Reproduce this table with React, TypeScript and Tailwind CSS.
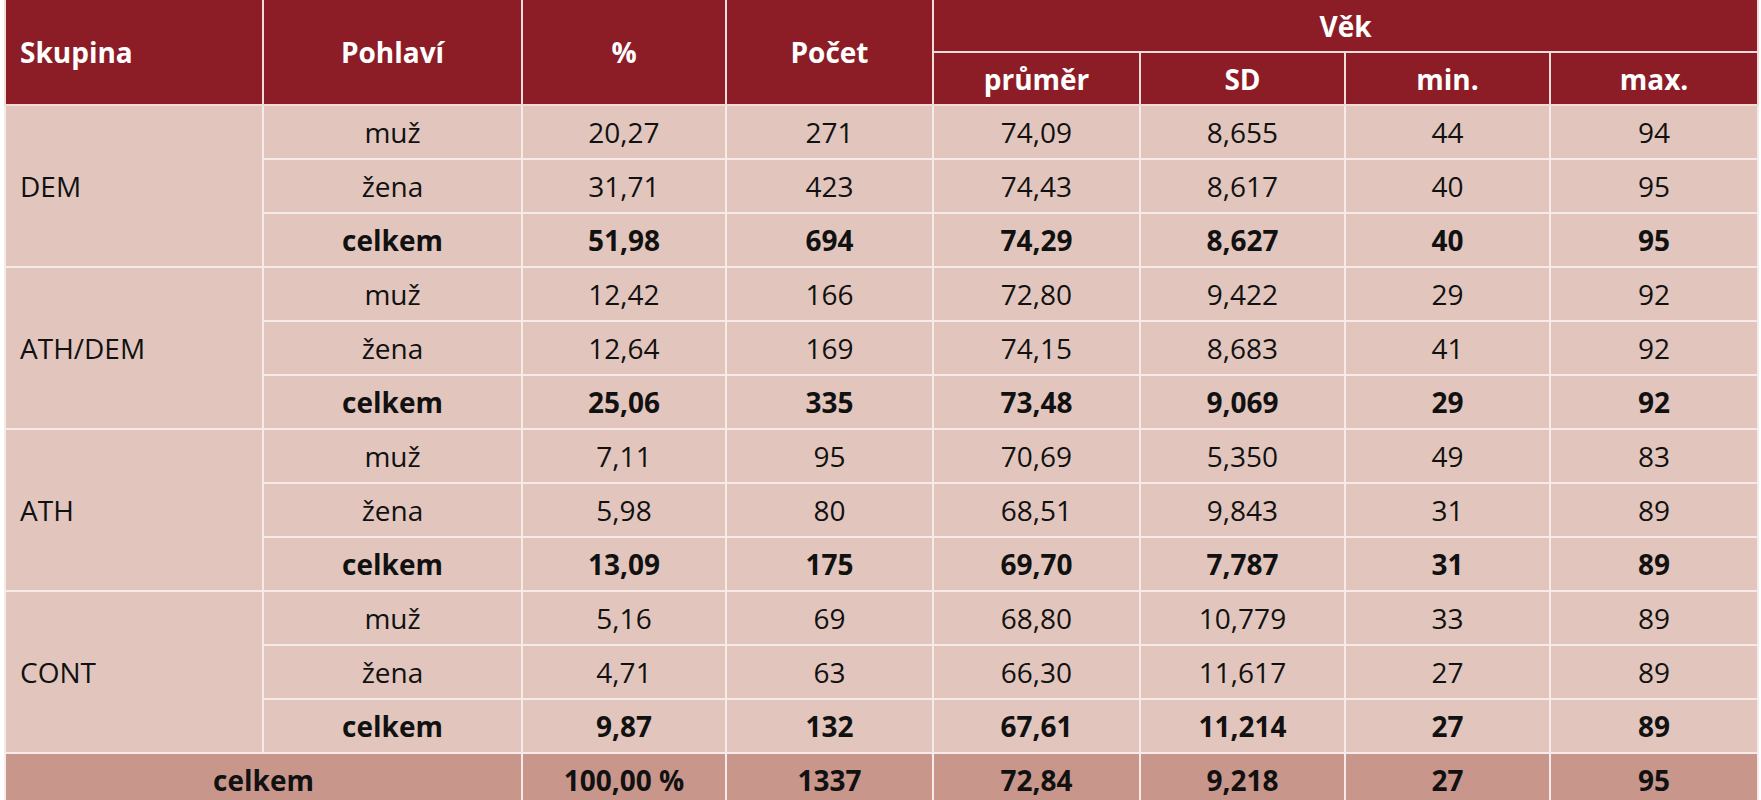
const rows: { group: string; items: string[][] }[] = [
  {
    group: "DEM",
    items: [
      ["muž", "20,27", "271", "74,09", "8,655", "44", "94"],
      ["žena", "31,71", "423", "74,43", "8,617", "40", "95"],
      ["celkem", "51,98", "694", "74,29", "8,627", "40", "95"],
    ],
  },
  {
    group: "ATH/DEM",
    items: [
      ["muž", "12,42", "166", "72,80", "9,422", "29", "92"],
      ["žena", "12,64", "169", "74,15", "8,683", "41", "92"],
      ["celkem", "25,06", "335", "73,48", "9,069", "29", "92"],
    ],
  },
  {
    group: "ATH",
    items: [
      ["muž", "7,11", "95", "70,69", "5,350", "49", "83"],
      ["žena", "5,98", "80", "68,51", "9,843", "31", "89"],
      ["celkem", "13,09", "175", "69,70", "7,787", "31", "89"],
    ],
  },
  {
    group: "CONT",
    items: [
      ["muž", "5,16", "69", "68,80", "10,779", "33", "89"],
      ["žena", "4,71", "63", "66,30", "11,617", "27", "89"],
      ["celkem", "9,87", "132", "67,61", "11,214", "27", "89"],
    ],
  },
];

const total = ["100,00 %", "1337", "72,84", "9,218", "27", "95"];

const th = "border-2 border-[#f1dcd8] border-t-0 font-bold text-white text-center p-0";
const td = "border-2 border-[#f6ebe8] text-center p-0 h-[54px]";

export default function App() {
  return (
    <div className="min-h-screen bg-white px-[4px] font-['Open_Sans',sans-serif] text-[28px] leading-none text-[#111]">
      <table className="w-[1753px] table-fixed border-collapse">
        <colgroup>
          <col className="w-[258px]" />
          <col className="w-[259px]" />
          <col className="w-[204px]" />
          <col className="w-[207px]" />
          <col className="w-[207px]" />
          <col className="w-[205px]" />
          <col className="w-[205px]" />
          <col className="w-[208px]" />
        </colgroup>
        <thead className="bg-[#8c1d27]">
          <tr className="h-[52px]">
            <th rowSpan={2} className={`${th} text-left pl-[14px]`}>Skupina</th>
            <th rowSpan={2} className={th}>Pohlaví</th>
            <th rowSpan={2} className={th}>%</th>
            <th rowSpan={2} className={th}>Počet</th>
            <th colSpan={4} className={th}>Věk</th>
          </tr>
          <tr className="h-[53px]">
            <th className={th}>průměr</th>
            <th className={th}>SD</th>
            <th className={th}>min.</th>
            <th className={th}>max.</th>
          </tr>
        </thead>
        <tbody className="bg-[#e2c6bd]">
          {rows.map((g) =>
            g.items.map((r, i) => {
              const bold = r[0] === "celkem";
              return (
                <tr key={g.group + i}>
                  {i === 0 && (
                    <td rowSpan={3} className="border-2 border-[#f6ebe8] text-left pl-[14px] p-0">
                      {g.group}
                    </td>
                  )}
                  {r.map((v, j) => (
                    <td key={j} className={`${td} ${bold ? "font-bold" : ""}`}>
                      {v}
                    </td>
                  ))}
                </tr>
              );
            })
          )}
          <tr className="bg-[#c9968c] font-bold">
            <td colSpan={2} className={td}>celkem</td>
            {total.map((v, j) => (
              <td key={j} className={td}>
                {v}
              </td>
            ))}
          </tr>
        </tbody>
      </table>
    </div>
  );
}
